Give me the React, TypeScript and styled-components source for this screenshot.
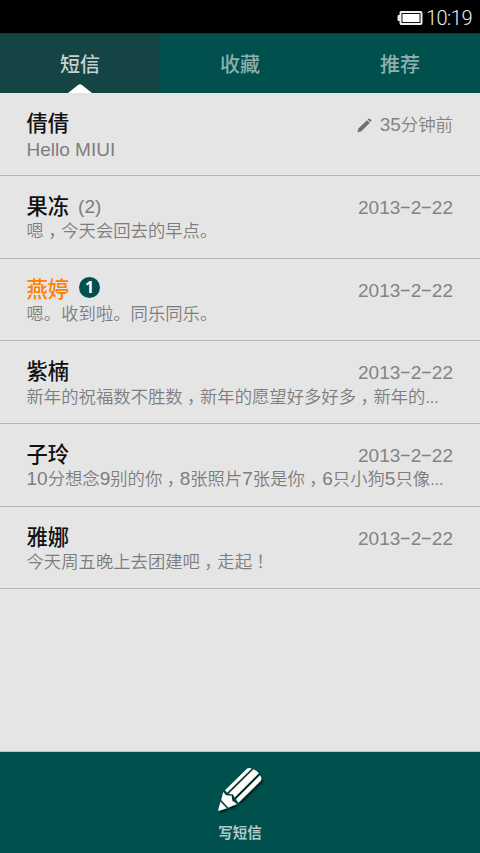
import React from "react";
import styled, { createGlobalStyle } from "styled-components";

const GlobalStyle = createGlobalStyle`
  * { box-sizing: border-box; }
  body {
    margin: 0;
    background: #e5e5e5;
    font-family: "Liberation Sans", "Noto Sans CJK SC", sans-serif;
  }
`;

const Screen = styled.div`
  display: flex;
  flex-direction: column;
  width: 480px;
  height: 853px;
  overflow: hidden;
  background: #e5e5e5;
`;

const StatusBar = styled.header`
  display: flex;
  flex: none;
  align-items: center;
  justify-content: flex-end;
  gap: 3px;
  height: 33px;
  padding: 3px 8px 0 0;
  background: #000;
`;

const Clock = styled.time`
  font: 300 20px/30px Roboto, sans-serif;
  letter-spacing: -0.5px;
  color: #eee;
`;

const Tabs = styled.nav`
  display: grid;
  flex: none;
  grid-template-columns: repeat(3, 1fr);
  height: 60px;
  background: #00504e;
  border-top: 1px solid #00403e;
`;

const Tab = styled.div<{ $active?: boolean }>`
  position: relative;
  font: 500 20px/59px "Noto Sans CJK SC", sans-serif;
  text-align: center;
  color: ${(p) => (p.$active ? "#c9d0cf" : "#8fb0ae")};
  background: ${(p) => (p.$active ? "#144443" : "transparent")};
`;

const Pointer = styled.svg`
  position: absolute;
  left: 68px;
  bottom: 0;
  display: block;
`;

const List = styled.main`
  flex: 1;
`;

const Row = styled.article`
  height: 82.65px;
  padding: 15px 27px 0 26.5px;
  border-bottom: 1px solid #b5b5b5;

  &:first-child {
    height: 83px;
  }
`;

const RowHead = styled.div`
  display: flex;
  align-items: center;
  height: 30px;
`;

const Name = styled.h2<{ $unread?: boolean }>`
  margin: 0;
  padding-bottom: 2px;
  font: 500 21.3px/28px "Noto Sans CJK SC", sans-serif;
  color: ${(p) => (p.$unread ? "#ff8000" : "#111")};
`;

const Count = styled.span`
  margin-left: 9px;
  padding-top: 2px;
  font: 19px/28px "Liberation Sans", sans-serif;
  color: #7d7d7d;
`;

const Badge = styled.span`
  width: 21px;
  height: 21px;
  margin: 0 0 2px 10px;
  border-radius: 50%;
  background: #00504c;
  color: #fff;
  font: 700 16px/21px "Open Sans", sans-serif;
  text-align: center;
`;

const When = styled.span`
  display: flex;
  align-items: center;
  gap: 8px;
  margin-left: auto;
  padding-top: 4px;
  font: 350 17.4px/26px "Liberation Sans", "Noto Sans CJK SC", sans-serif;
  color: #838383;
`;

const Preview = styled.p<{ $latin?: boolean }>`
  margin: ${(p) => (p.$latin ? -1 : -2.6)}px 0 0;
  white-space: nowrap;
  font: 350 17.35px/24px "Noto Sans CJK SC", sans-serif;
  color: #7d7d7d;
`;

const Latin = styled.span`
  font-family: "Liberation Sans", sans-serif;
  font-size: 19px;
  line-height: 20px;
`;

const Dash = styled.span`
  display: inline-block;
  width: 10.5px;
  font: 19px/20px "Liberation Sans", sans-serif;
  text-align: center;
  transform: translateY(-1px) scaleX(1.9);
`;

const Dots = styled.span`
  font-family: "Liberation Sans", sans-serif;
  font-size: 16px;
`;

const Mark = styled.span`
  padding: 0 0.25em;
  font-feature-settings: "halt";
`;

const Toolbar = styled.footer`
  display: flex;
  flex: none;
  flex-direction: column;
  align-items: center;
  height: 101px;
  padding-top: 12px;
  background: #00504e;
  box-shadow: 0 -1px 0 #b9c4c3;
`;

const ToolLabel = styled.span`
  margin-top: 4px;
  font: 700 14.5px/24px "Noto Sans CJK SC", sans-serif;
  color: #b3c9c7;
`;

function Battery() {
  return (
    <svg width="26" height="16" viewBox="0 0 26 16">
      <path d="M4 1H23.5Q25.5 1 25.5 3V13Q25.5 15 23.5 15H4Q2.5 15 2.5 13V11H1.5Q.5 11 .5 9.5V6.5Q.5 5 1.5 5H2.5V3Q2.5 1 4 1Z" fill="#eee" />
      <rect x="4.5" y="3" width="19" height="10" fill="#111" />
      <rect x="5.5" y="4" width="17" height="8" fill="#fff" />
    </svg>
  );
}

function DraftPencil() {
  return (
    <svg width="15" height="15" viewBox="0 0 15 15" fill="#707070">
      <path d="M.4 14.5L1.600 10.300L10 2.200L12.700 4.900L4.400 13.200Z" />
      <path d="M10.700 1.600L11.600.7Q12.200.300 12.700.800L14.200 2.200Q14.600 2.700 14.200 3.200L13.300 4.200Z" />
    </svg>
  );
}

function ComposePencil() {
  return (
    <svg width="52" height="52" viewBox="0 0 52 52">
      <defs>
        <filter id="shade" x="-20%" y="-20%" width="150%" height="150%">
          <feDropShadow dx="1.5" dy="2" stdDeviation="1.2" floodColor="#000" floodOpacity=".65" />
        </filter>
      </defs>
      <g filter="url(#shade)" fill="#fffefa">
        <path d="M11 26.2L33.200 4.600Q35 3.300 37.800 4.400L13.200 28.400Z" />
        <path d="M14.700 29.700L39.600 5.200Q42.800 6.500 44.800 9.200L20.500 33.600L19.300 30.600Z" />
        <path d="M22 35.200L46 11.200Q48.300 14.500 46.700 16.800L24.400 38.700Z" />
        <path d="M9.200 28L12 31.300L17.600 31.800L18.200 36.700L23 40L14.300 43.400L7.200 36Z" />
        <path d="M6.400 37.800L12.700 44.200L4 47Z" />
      </g>
    </svg>
  );
}

type Thread = {
  name: string;
  text: string;
  when: string;
  count?: number;
  unread?: number;
  draft?: boolean;
};

const threads: Thread[] = [
  { name: "倩倩", text: "Hello MIUI", when: "35分钟前", draft: true },
  { name: "果冻", text: "嗯，今天会回去的早点。", when: "2013-2-22", count: 2 },
  { name: "燕婷", text: "嗯。收到啦。同乐同乐。", when: "2013-2-22", unread: 1 },
  { name: "紫楠", text: "新年的祝福数不胜数，新年的愿望好多好多，新年的...", when: "2013-2-22" },
  { name: "子玲", text: "10分想念9别的你，8张照片7张是你，6只小狗5只像...", when: "2013-2-22" },
  { name: "雅娜", text: "今天周五晚上去团建吧，走起！", when: "2013-2-22" },
];

function typeset(text: string) {
  return text.split(/([，！]|-|\.{3}|[0-9A-Za-z][0-9A-Za-z ]*)/).map((part, i) => {
    if (/^[，！]$/.test(part)) return <Mark key={i}>{part}</Mark>;
    if (part === "-") return <Dash key={i}>-</Dash>;
    if (part === "...") return <Dots key={i}>{part}</Dots>;
    if (/^[0-9A-Za-z]/.test(part)) return <Latin key={i}>{part}</Latin>;
    return part;
  });
}

export default function App() {
  return (
    <Screen>
      <GlobalStyle />
      <StatusBar>
        <Battery />
        <Clock>10:19</Clock>
      </StatusBar>
      <Tabs>
        <Tab $active>
          短信
          <Pointer width="24" height="9" viewBox="0 0 24 9">
            <path d="M0 9L10 1Q12-.5 14 1L24 9Z" fill="#fff" />
          </Pointer>
        </Tab>
        <Tab>收藏</Tab>
        <Tab>推荐</Tab>
      </Tabs>
      <List>
        {threads.map((t) => (
          <Row key={t.name}>
            <RowHead>
              <Name $unread={!!t.unread}>{t.name}</Name>
              {t.count && <Count>({t.count})</Count>}
              {t.unread && <Badge>{t.unread}</Badge>}
              <When>
                {t.draft && <DraftPencil />}
                <span>{typeset(t.when)}</span>
              </When>
            </RowHead>
            <Preview $latin={t.draft}>{typeset(t.text)}</Preview>
          </Row>
        ))}
      </List>
      <Toolbar>
        <ComposePencil />
        <ToolLabel>写短信</ToolLabel>
      </Toolbar>
    </Screen>
  );
}
